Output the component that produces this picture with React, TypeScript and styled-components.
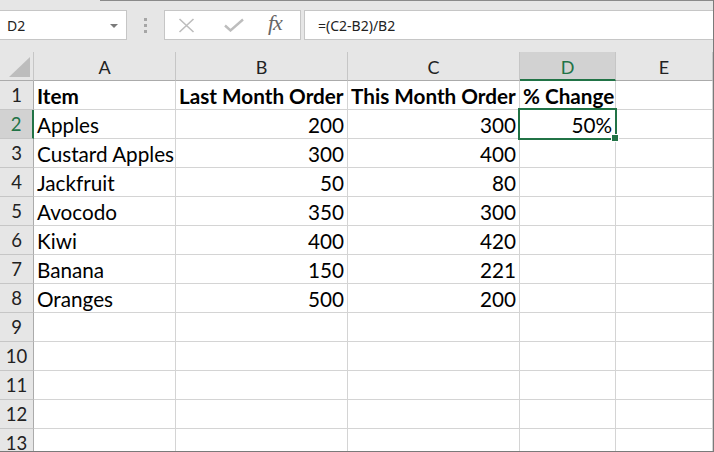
import React from "react";
import styled, { createGlobalStyle, css } from "styled-components";

const GREEN = "#217346";
const GRID = "#d4d4d4";
const HEAD_LINE = "#c6c6c6";

const Global = createGlobalStyle`
  html, body {
    margin: 0;
    padding: 0;
    background: #ffffff;
  }
  * { box-sizing: border-box; }
`;

const Window = styled.div`
  width: 714px;
  height: 452px;
  overflow: hidden;
  background: #ffffff;
  border-right: 1px solid #7a7a7a;
  border-bottom: 1px solid #7a7a7a;
  display: flex;
  flex-direction: column;
  position: relative;
`;

const Toolbar = styled.div`
  height: 52px;
  flex: 0 0 52px;
  display: flex;
  align-items: flex-start;
  padding-top: 10px;
  background:
    linear-gradient(to right, #e6e6e6 100px, #8a8a8a 100px) top / 100% 1px no-repeat,
    #e6e6e6;
  font-family: "Noto Sans", "Open Sans", sans-serif;
  font-size: 14px;
  color: #222;
`;

const NameBox = styled.div`
  width: 127px;
  height: 30px;
  background: #fff;
  border: 1px solid ${HEAD_LINE};
  border-left: none;
  display: flex;
  align-items: center;
  justify-content: space-between;
  padding: 0 8px 0 7px;
`;

const DropArrow = styled.span`
  width: 0;
  height: 0;
  border-left: 4px solid transparent;
  border-right: 4px solid transparent;
  border-top: 4px solid #7a7a7a;
  margin-top: 1px;
`;

const Grip = styled.div`
  width: 37px;
  height: 30px;
  display: flex;
  flex-direction: column;
  align-items: center;
  justify-content: center;
  gap: 3px;
`;

const GripDot = styled.span`
  width: 3px;
  height: 3px;
  background: #a6a6a6;
`;

const FormulaButtons = styled.div`
  width: 137px;
  height: 30px;
  background: #fff;
  border: 1px solid ${HEAD_LINE};
  display: flex;
  align-items: center;
  padding-left: 13px;
`;

const IconSlot = styled.span<{ $w: number }>`
  width: ${(p) => p.$w}px;
  display: flex;
  align-items: center;
`;

const Fx = styled.span`
  font-family: "Liberation Serif", "DejaVu Serif", serif;
  font-style: italic;
  font-size: 22px;
  color: #666666;
  letter-spacing: -1px;
  margin-top: -4px;
`;

const FormulaInput = styled.div`
  flex: 1;
  height: 30px;
  margin-left: 3px;
  background: #fff;
  border: 1px solid ${HEAD_LINE};
  border-right: none;
  display: flex;
  align-items: center;
  padding-left: 13px;
`;

const Sheet = styled.div`
  display: grid;
  grid-template-columns: 34px 142px 172px 172px 96px 97px;
  grid-auto-rows: 29px;
  font-family: Lato, "Noto Sans", sans-serif;
  position: relative;
`;

const Corner = styled.div`
  background: #e6e6e6;
  border-right: 1px solid ${HEAD_LINE};
  border-bottom: 1px solid #ababab;
  position: relative;
  &::after {
    content: "";
    position: absolute;
    right: 3px;
    bottom: 3px;
    width: 0;
    height: 0;
    border-left: 21px solid transparent;
    border-bottom: 20px solid #bdbdbd;
  }
`;

const ColHead = styled.div<{ $sel?: boolean }>`
  background: #e6e6e6;
  border-right: 1px solid ${HEAD_LINE};
  border-bottom: 1px solid #ababab;
  display: flex;
  align-items: center;
  justify-content: center;
  font-size: 18px;
  color: #222;
  padding-top: 2px;
  ${(p) =>
    p.$sel &&
    css`
      background: #d2d2d2;
      color: ${GREEN};
      border-bottom: 2px solid ${GREEN};
    `}
`;

const RowHead = styled.div<{ $sel?: boolean }>`
  background: #e6e6e6;
  border-right: 1px solid #ababab;
  border-bottom: 1px solid ${HEAD_LINE};
  display: flex;
  align-items: center;
  justify-content: center;
  font-size: 18.5px;
  color: #222;
  ${(p) =>
    p.$sel &&
    css`
      background: #d2d2d2;
      color: ${GREEN};
      border-right: 2px solid ${GREEN};
    `}
`;

const Cell = styled.div<{ $num?: boolean; $bold?: boolean }>`
  border-right: 1px solid ${GRID};
  border-bottom: 1px solid ${GRID};
  display: flex;
  align-items: center;
  justify-content: ${(p) => (p.$num ? "flex-end" : "flex-start")};
  padding: 1px 3px 0 3px;
  font-size: 20.7px;
  font-weight: ${(p) => (p.$bold ? 700 : 400)};
  color: #000;
  white-space: nowrap;
  overflow: visible;
`;

const Selection = styled.div`
  position: absolute;
  left: 518px;
  top: 56px;
  width: 99px;
  height: 32px;
  border: 2px solid ${GREEN};
  pointer-events: none;
  &::after {
    content: "";
    position: absolute;
    right: -4px;
    bottom: -4px;
    width: 6px;
    height: 6px;
    background: ${GREEN};
    border: 1px solid #fff;
  }
`;

const columns = ["A", "B", "C", "D", "E"];

const data: (string | number)[][] = [
  ["Apples", 200, 300, "50%"],
  ["Custard Apples", 300, 400],
  ["Jackfruit", 50, 80],
  ["Avocodo", 350, 300],
  ["Kiwi", 400, 420],
  ["Banana", 150, 221],
  ["Oranges", 500, 200],
];

const header = ["Item", "Last Month Order", "This Month Order", "% Change", ""];

export default function App() {
  const rows: React.ReactNode[] = [];
  for (let r = 1; r <= 13; r++) {
    rows.push(
      <RowHead key={`h${r}`} $sel={r === 2}>
        {r}
      </RowHead>
    );
    for (let c = 0; c < 5; c++) {
      if (r === 1) {
        rows.push(
          <Cell key={`${r}-${c}`} $bold>
            {header[c]}
          </Cell>
        );
        continue;
      }
      const v = data[r - 2]?.[c];
      rows.push(
        <Cell key={`${r}-${c}`} $num={c > 0}>
          {v ?? ""}
        </Cell>
      );
    }
  }

  return (
    <>
      <Global />
      <Window>
        <Toolbar>
          <NameBox>
            <span>D2</span>
            <DropArrow />
          </NameBox>
          <Grip>
            <GripDot />
            <GripDot />
            <GripDot />
          </Grip>
          <FormulaButtons>
            <IconSlot $w={46}>
              <svg width="17" height="15" viewBox="0 0 17 15">
                <path d="M1.5 1 L15.5 14 M15.5 1 L1.5 14" stroke="#bdbdbd" strokeWidth="1.6" fill="none" />
              </svg>
            </IconSlot>
            <IconSlot $w={44}>
              <svg width="20" height="14" viewBox="0 0 20 14">
                <path d="M1 7.5 L6.5 12.5 L19 1.5" stroke="#bdbdbd" strokeWidth="2.4" fill="none" />
              </svg>
            </IconSlot>
            <IconSlot $w={30}>
              <Fx>fx</Fx>
            </IconSlot>
          </FormulaButtons>
          <FormulaInput>=(C2-B2)/B2</FormulaInput>
        </Toolbar>
        <Sheet>
          <Corner />
          {columns.map((c) => (
            <ColHead key={c} $sel={c === "D"}>
              {c}
            </ColHead>
          ))}
          {rows}
          <Selection />
        </Sheet>
      </Window>
    </>
  );
}
